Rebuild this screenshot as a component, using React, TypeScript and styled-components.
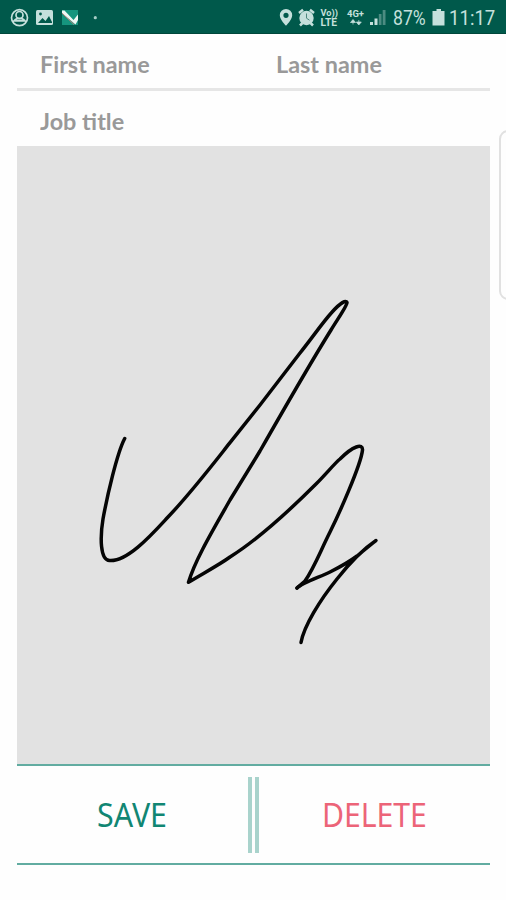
import React from "react";
import styled, { createGlobalStyle } from "styled-components";

const Global = createGlobalStyle`
  * { box-sizing: border-box; }
  body { margin: 0; background: #fefefe; }
`;

const Screen = styled.main`
  position: relative;
  width: 506px;
  height: 900px;
  overflow: hidden;
  background: #fefefe;
`;

const StatusBar = styled.header`
  display: flex;
  justify-content: space-between;
  height: 34px;
  background: #00594b;
  border-bottom: 1px solid #00473b;
`;

const StatusIcons = styled.svg`
  display: block;
  height: 33px;
`;

const StatusRight = styled.div`
  display: flex;
`;

const Reading = styled.span<{ $width: number; $scale: number }>`
  width: ${(p) => p.$width}px;
  font: 400 20px/36px Roboto, sans-serif;
  color: #c5e0dc;
  white-space: nowrap;
  transform: scaleX(${(p) => p.$scale});
  transform-origin: left;
`;

const Form = styled.section`
  width: 473px;
  margin-left: 17px;
`;

const FieldRow = styled.div<{ $height: number; $ruled?: boolean }>`
  display: grid;
  grid-template-columns: 236px 1fr;
  height: ${(p) => p.$height}px;
  border-bottom: ${(p) => (p.$ruled ? "3px solid #e6e6e6" : "0")};
`;

const FieldLabel = styled.label<{ $line: number }>`
  padding-left: 23px;
  font: 700 22.5px/${(p) => p.$line}px Lato, "Open Sans", sans-serif;
  color: #999;
  white-space: nowrap;
  transform: scaleX(1.04);
  transform-origin: 23px 50%;
`;

const SignaturePad = styled.div`
  height: 618px;
  background: #e2e2e2;
`;

const Ink = styled.svg`
  display: block;
  width: 473px;
  height: 618px;
  fill: none;
  stroke: #050505;
  stroke-width: 3.5;
  stroke-linecap: round;
  stroke-linejoin: round;
`;

const Actions = styled.div`
  display: grid;
  grid-template-columns: 231px 11px 1fr;
  height: 101px;
  border-top: 2px solid #62aca1;
  border-bottom: 2px solid #62aca1;
`;

const Action = styled.button<{ $color: string; $scale: number }>`
  display: flex;
  justify-content: center;
  padding: 0;
  border: 0;
  background: none;
  color: ${(p) => p.$color};
  font: 400 33px/98px "Noto Sans", sans-serif;

  span {
    transform: scaleX(${(p) => p.$scale});
  }
`;

const Divider = styled.div`
  height: 76px;
  margin-top: 11px;
  border: solid #a9d3cc;
  border-width: 0 4px;
`;

const EdgeHandle = styled.aside`
  position: absolute;
  top: 130px;
  right: -12px;
  width: 19px;
  height: 170px;
  border: 2px solid #e1e1e1;
  border-radius: 9px;
  background: #fefefe;
`;

function NotificationIcons() {
  return (
    <StatusIcons width="110" viewBox="0 0 110 33">
      <g fill="none" stroke="#c5e0dc" strokeWidth="1.7">
        <circle cx="19.5" cy="17.7" r="8" />
        <circle cx="19.5" cy="15" r="3.5" />
        <path d="M13 22.2c2-3 3.5-3.5 4.8-3.5h3.4c1.3 0 2.8.5 4.8 3.5M15 20.8h9" />
      </g>
      <rect x="36" y="10" width="17" height="15" rx="1.5" fill="#c5e0dc" />
      <path d="M38 23l4.5-5 3 3 3.5-5 3 6v1z" fill="#00594b" />
      <circle cx="40.5" cy="14" r="1.4" fill="#00594b" />
      <path d="M62 10h16v15H62z" fill="#16957e" />
      <path d="M62 10.5h2.5l9 9.5 4.5-5.5V20l-2.5 4.5L62 13z" fill="#f0f7f4" />
      <path d="M62 13.2l12 11.3" fill="none" stroke="#c87f78" strokeWidth=".9" />
      <circle cx="95.3" cy="17.7" r="1.6" fill="#a6cdc6" />
    </StatusIcons>
  );
}

function ConnectionIcons() {
  return (
    <StatusIcons width="114" viewBox="279 0 114 33">
      <path
        fillRule="evenodd"
        d="M286 9a6.2 6.2 0 0 0-6.2 6.2c0 4.5 6.2 10.4 6.2 10.4s6.2-5.9 6.2-10.4A6.2 6.2 0 0 0 286 9m0 3.7a2.6 2.6 0 1 1 0 5.2 2.6 2.6 0 0 1 0-5.2"
        fill="#c5e0dc"
      />
      <circle cx="306.5" cy="18" r="7.2" fill="#c5e0dc" />
      <path d="M299 13l4-3.2M314 13l-4-3.2M302.5 23l-2.5 2.5M310.5 23l2.5 2.5" stroke="#c5e0dc" strokeWidth="2.5" />
      <path d="M306.5 13.5v4.7l3 2" fill="none" stroke="#4d877d" strokeWidth="1" />
      <g fill="#c5e0dc" fontFamily="Roboto, sans-serif" fontWeight="700">
        <text x="320.5" y="16" fontSize="8.5" textLength="17.5" lengthAdjust="spacingAndGlyphs">Vo))</text>
        <text x="320.5" y="26" fontSize="10" textLength="16.5" lengthAdjust="spacingAndGlyphs">LTE</text>
        <text x="347" y="17" fontSize="9.5" textLength="17" lengthAdjust="spacingAndGlyphs">4G+</text>
      </g>
      <path d="M353 19.5l2.5 3h-5zM353 22v2.5M358.8 25l2.5-3h-5zM358.8 22.5v-2.5" fill="#c5e0dc" stroke="#c5e0dc" strokeWidth=".7" />
      <path d="M370 22h3v3h-3zM374.5 18.5h3V25h-3z" fill="#c5e0dc" />
      <path d="M378.8 14h2.7v11h-2.7zM382.7 10h2.8v15h-2.8z" fill="#4c8c82" />
    </StatusIcons>
  );
}

function Battery() {
  return (
    <StatusIcons width="19" viewBox="428.5 0 19 33">
      <path d="M435 9h4.5v2h3.5v14.5h-12V11h4z" fill="#c5e0dc" />
    </StatusIcons>
  );
}

export default function App() {
  return (
    <>
      <Global />
      <Screen>
        <StatusBar>
          <NotificationIcons />
          <StatusRight>
            <ConnectionIcons />
            <Reading $width={37} $scale={0.88}>87%</Reading>
            <Battery />
            <Reading $width={57} $scale={0.93}>11:17</Reading>
          </StatusRight>
        </StatusBar>
        <Form>
          <FieldRow $height={57} $ruled>
            <FieldLabel $line={62}>First name</FieldLabel>
            <FieldLabel $line={62}>Last name</FieldLabel>
          </FieldRow>
          <FieldRow $height={55}>
            <FieldLabel $line={62}>Job title</FieldLabel>
          </FieldRow>
          <SignaturePad>
            <Ink viewBox="17 146 473 618">
              <path
                d="M124.7 438.5C117 453 107 497 103 519C100 537 100 560 109.5 560.5
                C128 562 154 532 168 517C190 494 210 468 230 442.7L260 405L300 353C312 338 323 322 331.7 312.5
                C341 302 346 300 347 302.5C347 306 337 320 331 330C311 362 280 416 260 451L230 500
                C213 530 195 560 188.5 582.3C202 574 219 565 230 557C260 538 294 506 316 484
                C326 474 335 463 340 459C353 446 363 443 362.5 450C361 465 338 516 330 532C320 552 314 568 305 581L297 588"
              />
              <path d="M297 588C302 583 320 577 330 572C340 567 349 562 357 556L376 540.5C362 550 348 565 337 579C320 600 304 626 301 642.5" />
            </Ink>
          </SignaturePad>
          <Actions>
            <Action $color="#118673" $scale={0.92}><span>SAVE</span></Action>
            <Divider />
            <Action $color="#ec6478" $scale={0.915}><span>DELETE</span></Action>
          </Actions>
        </Form>
        <EdgeHandle />
      </Screen>
    </>
  );
}
